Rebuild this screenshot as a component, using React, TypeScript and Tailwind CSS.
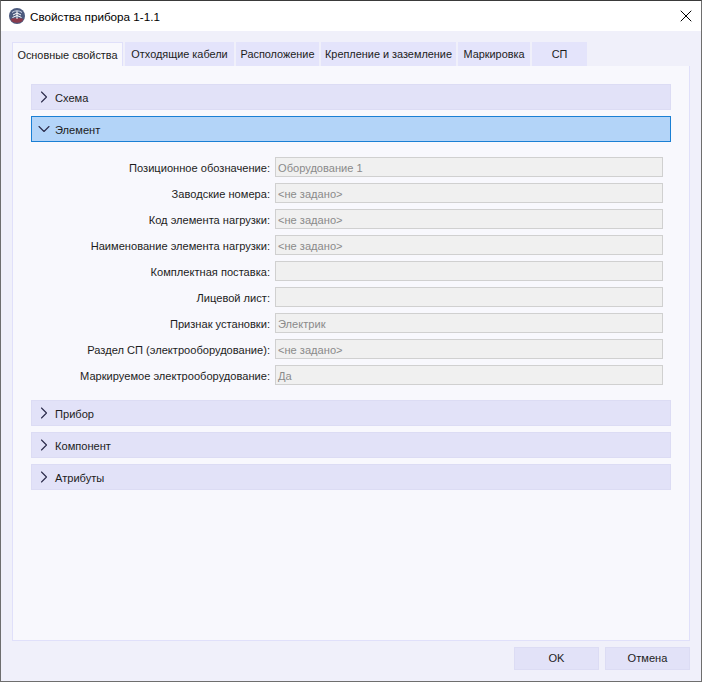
import { ChevronDown, ChevronRight, X } from "lucide-react";

const font = "font-['Liberation_Sans','Noto_Sans',sans-serif]";

const tabs = [
  { label: "Отходящие кабели", w: "w-[109px]" },
  { label: "Расположение", w: "w-[83px]" },
  { label: "Крепление и заземление", w: "w-[135px]" },
  { label: "Маркировка", w: "w-[72px]" },
  { label: "СП", w: "w-[55px]" },
];

const rows = [
  { label: "Позиционное обозначение:", value: "Оборудование 1" },
  { label: "Заводские номера:", value: "<не задано>" },
  { label: "Код элемента нагрузки:", value: "<не задано>" },
  { label: "Наименование элемента нагрузки:", value: "<не задано>" },
  { label: "Комплектная поставка:", value: "" },
  { label: "Лицевой лист:", value: "" },
  { label: "Признак установки:", value: "Электрик" },
  { label: "Раздел СП (электрооборудование):", value: "<не задано>" },
  { label: "Маркируемое электрооборудование:", value: "Да" },
];

const Section = ({ title, open = false }: { title: string; open?: boolean }) => (
  <div
    className={`flex h-[26px] items-center border pl-[2px] ${
      open ? "border-[#1a7fd4] bg-[#b3d4f8]" : "border-[#dcdcf4] bg-[#e2e2f8]"
    }`}
  >
    {open ? (
      <ChevronDown className="h-[20px] w-[20px] text-[#2b2b4a]" strokeWidth={1.3} />
    ) : (
      <ChevronRight className="h-[20px] w-[20px] text-[#2b2b4a]" strokeWidth={1.3} />
    )}
    <span className="ml-[1px] pt-[2px] text-[11.1px] text-[#1c1c1c]">{title}</span>
  </div>
);

const Logo = () => (
  <svg width="16" height="16" viewBox="0 0 16 16" className="shrink-0">
    <circle cx="8" cy="8" r="8" fill="#4c5a7e" />
    <path d="M1.500 11Q8 9 14.500 11L13 13.500Q8 16 3 13.500Z" fill="#8a3a4c" />
    <path d="M8 3v8M8 5 4 7M8 5l4 2M8 7.500 3.500 9.500M8 7.500l4.500 2" stroke="#fff" strokeWidth="1" fill="none" />
    <path d="M3 4.500Q8 1 13 4.500" stroke="#cfd6e8" strokeWidth="1" fill="none" />
  </svg>
);

export default function App() {
  return (
    <div className={`flex h-[682px] w-[702px] flex-col border-x border-b border-t border-x-[#6e6e6e] border-b-[#6e6e6e] border-t-[#3a3a3a] bg-[#f0f0fa] ${font}`}>
      {/* title bar */}
      <div className="flex h-[30px] shrink-0 items-center bg-white pl-[8px] pr-[5px]">
        <Logo />
        <span className="ml-[5px] pt-[1px] text-[11.7px] text-black">Свойства прибора 1-1.1</span>
        <X className="ml-auto h-[20px] w-[20px] text-black" strokeWidth={1.2} />
      </div>

      {/* tabs */}
      <div className="flex flex-1 flex-col px-[11px] pt-[11px]">
        <div className="flex h-[24px] items-stretch gap-[2px]">
          <div className="flex w-[111px] items-center justify-center whitespace-nowrap border-x border-t border-[#e0e0fa] bg-[#f8f8fd] pt-[2px] text-[10.9px] text-[#1c1c1c]">
            Основные свойства
          </div>
          {tabs.map((t) => (
            <div key={t.label} className={`flex ${t.w} items-center justify-center whitespace-nowrap bg-[#e4e4fb] pt-[1px] text-[10.9px] text-[#1c1c1c]`}>
              {t.label}
            </div>
          ))}
        </div>

        {/* panel */}
        <div className="flex h-[575px] flex-col border border-t-0 border-[#e0e0fa] bg-[#f8f8fd] px-[18px] pt-[18px]">
          <div className="flex flex-col gap-[6px]">
            <Section title="Схема" />
            <Section title="Элемент" open />
          </div>
          <div className="flex flex-col gap-[6px] pb-[15px] pl-[1px] pr-[8px] pt-[15px]">
            {rows.map((r) => (
              <div key={r.label} className="flex h-[20px] items-center">
                <div className="w-[243px] whitespace-nowrap pr-[5px] pt-[2px] text-right text-[11.1px] text-[#1c1c1c]">{r.label}</div>
                <div className="flex h-[20px] flex-1 items-center border border-[#d0d0d0] bg-[#f0f0f0] pl-[2px] pt-[2px] text-[11.1px] text-[#8a8a8a]">
                  {r.value}
                </div>
              </div>
            ))}
          </div>
          <div className="flex flex-col gap-[6px]">
            <Section title="Прибор" />
            <Section title="Компонент" />
            <Section title="Атрибуты" />
          </div>
        </div>

        {/* buttons */}
        <div className="mt-[6px] flex justify-end gap-[6px]">
          <button className="h-[23px] w-[85px] border border-[#dcdcf4] bg-[#e2e2f8] text-[11.1px] text-[#1c1c1c]">OK</button>
          <button className="h-[23px] w-[85px] border border-[#dcdcf4] bg-[#e2e2f8] text-[11.1px] text-[#1c1c1c]">Отмена</button>
        </div>
      </div>
    </div>
  );
}
